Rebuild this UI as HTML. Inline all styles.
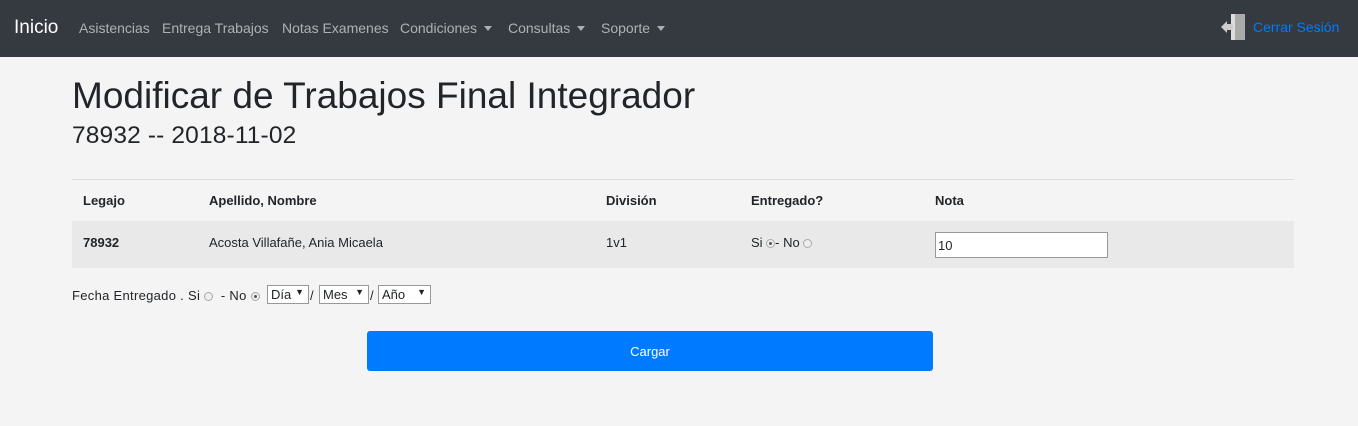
<!DOCTYPE html>
<html><head><meta charset="utf-8"><style>
*{box-sizing:border-box;margin:0;padding:0}
body{width:1358px;height:426px;background:#f4f4f4;font-family:"Liberation Sans",sans-serif;color:#212529;position:relative;overflow:hidden}
.nav{position:absolute;left:0;top:0;width:1358px;height:57px;background:#343a40}
.nav span{position:absolute;top:20px;font-size:14px;color:rgba(255,255,255,.6)}
.brand{left:14px!important;top:17px!important;font-size:19px!important;color:#fff!important}
.caret{display:inline-block;margin-left:7px;border-top:5px solid rgba(255,255,255,.6);border-left:4px solid transparent;border-right:4px solid transparent;vertical-align:2px}
.a{position:absolute}
h1{position:absolute;left:72px;top:75px;font-size:37px;font-weight:500}
h2{position:absolute;left:72px;top:122px;font-size:24.5px;font-weight:500;letter-spacing:.15px}
.th{position:absolute;top:193px;font-size:13px;font-weight:bold}
.row{position:absolute;left:72px;top:221px;width:1222px;height:47px;background:#e9e9e9}
.td{position:absolute;top:235px;font-size:13px}
.radio{display:inline-block;width:9px;height:9px;border:1px solid #aaa;border-radius:50%;background:#eee;vertical-align:-1px;position:relative}
.radio.on::after{content:"";position:absolute;left:2px;top:2px;width:3px;height:3px;border-radius:50%;background:#555}
.sel{position:absolute;top:285px;border:1px solid #999;background:#fff;height:19px;font-size:13px;padding:1px 3px}
.sel::after{content:"▼";position:absolute;right:4px;top:1px;font-size:9px}
.t{position:absolute;top:288px;font-size:13px;white-space:nowrap}
</style></head><body>
<div class="nav">
<span class="brand">Inicio</span>
<span style="left:79px">Asistencias</span>
<span style="left:162px">Entrega Trabajos</span>
<span style="left:282px">Notas Examenes</span>
<span style="left:400px">Condiciones<i class="caret"></i></span>
<span style="left:508px">Consultas<i class="caret"></i></span>
<span style="left:601px">Soporte<i class="caret"></i></span>
<svg class="a" style="left:1220px;top:13px" width="28" height="28" viewBox="0 0 28 28"><rect x="11" y="1" width="14" height="26" fill="#aaa"/><rect x="11" y="1" width="4" height="26" fill="#ddd"/><path d="M1 14 L7 8 L7 11 L13 11 L13 17 L7 17 L7 20 Z" fill="#ccc"/></svg>
<span style="left:1253px;top:19px;color:#007bff">Cerrar Sesión</span>
</div>
<h1>Modificar de Trabajos Final Integrador</h1>
<h2>78932 -- 2018-11-02</h2>
<div class="a" style="left:72px;top:179px;width:1222px;height:1px;background:#ddd"></div>
<div class="th" style="left:83px">Legajo</div>
<div class="th" style="left:209px">Apellido, Nombre</div>
<div class="th" style="left:606px">División</div>
<div class="th" style="left:751px">Entregado?</div>
<div class="th" style="left:935px">Nota</div>
<div class="row"></div>
<div class="td" style="left:83px;font-weight:bold">78932</div>
<div class="td" style="left:209px">Acosta Villafañe, Ania Micaela</div>
<div class="td" style="left:606px">1v1</div>
<div class="td" style="left:751px">Si <span class="radio on"></span>- No <span class="radio"></span></div>
<div class="a" style="left:935px;top:232px;width:173px;height:26px;border:1px solid #999;background:#fff;font-size:13px;padding:5px 2px">10</div>
<div class="t" style="left:72px;letter-spacing:.3px">Fecha Entregado . Si <span class="radio"></span> &nbsp;- No <span class="radio on"></span></div>
<span class="sel" style="left:267px;width:42px">Día</span><span class="t" style="left:310px">/</span>
<span class="sel" style="left:319px;width:50px">Mes</span><span class="t" style="left:370px">/</span>
<span class="sel" style="left:378px;width:53px">Año</span>
<div class="a" style="left:367px;top:331px;width:566px;height:40px;background:#007bff;border-radius:3px;color:#fff;font-size:13px;text-align:center;line-height:42px">Cargar</div>
</body></html>
